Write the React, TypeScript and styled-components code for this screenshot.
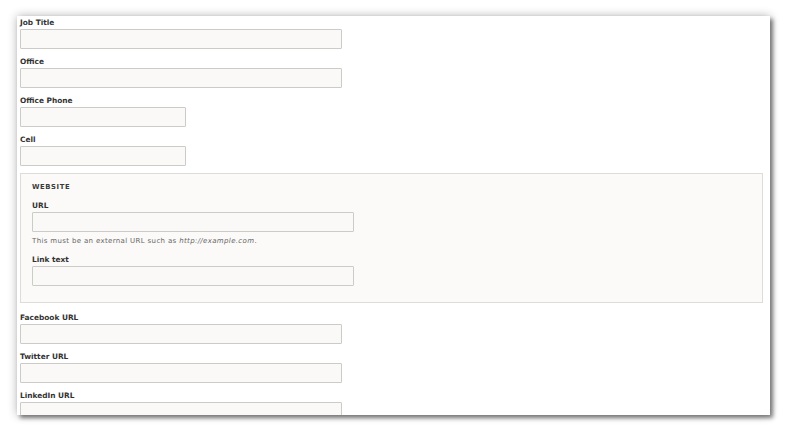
import styled, { createGlobalStyle } from 'styled-components';

const GlobalStyle = createGlobalStyle`
  html, body {
    margin: 0;
    padding: 0;
    background: #ffffff;
  }
  body {
    font-family: "DejaVu Sans", Verdana, sans-serif;
  }
`;

const Page = styled.div`
  width: 787px;
  height: 432px;
  padding: 16px 17px 0 17px;
  box-sizing: border-box;
`;

const Window = styled.div`
  width: 753px;
  height: 399px;
  background: #ffffff;
  overflow: hidden;
  box-shadow: 3px 3px 4px rgba(0, 0, 0, 0.45), 0 0 9px rgba(0, 0, 0, 0.3);
  padding: 0 3px;
  box-sizing: border-box;
`;

const Form = styled.form`
  display: flex;
  flex-direction: column;
`;

const Item = styled.div`
  display: flex;
  flex-direction: column;
  align-items: flex-start;
  margin-bottom: 6px;
`;

const Label = styled.label`
  display: block;
  font-size: 7.4px;
  font-weight: bold;
  line-height: 13px;
  color: #333333;
`;

const TextInput = styled.input<{ $size?: 'short' | 'long' }>`
  box-sizing: border-box;
  width: ${p => (p.$size === 'short' ? '166px' : '322px')};
  height: 20px;
  margin: 0;
  padding: 2px 4px;
  border: 1px solid #cbcbc8;
  border-radius: 1px;
  background: #faf9f7;
  font-family: inherit;
  font-size: 7px;
  outline: none;
`;

const Fieldset = styled.section`
  box-sizing: border-box;
  width: 743px;
  margin: 1px 0 8px 0;
  padding: 7px 11px 10px 11px;
  border: 1px solid #dddcd8;
  background: #fbfaf8;
`;

const Legend = styled.div`
  font-size: 6.8px;
  font-weight: bold;
  letter-spacing: 0.6px;
  text-transform: uppercase;
  line-height: 12px;
  color: #3a3a3a;
  margin-bottom: 6px;
`;

const Description = styled.div`
  font-size: 7px;
  line-height: 12px;
  margin-top: 3px;
  letter-spacing: 0.35px;
  color: #666666;

  em {
    font-style: italic;
  }
`;

interface FieldProps {
  label: string;
  size?: 'short' | 'long';
  description?: React.ReactNode;
}

const Field = ({ label, size = 'long', description }: FieldProps) => (
  <Item>
    <Label>{label}</Label>
    <TextInput type="text" $size={size} />
    {description && <Description>{description}</Description>}
  </Item>
);

export default function App() {
  return (
    <Page>
      <GlobalStyle />
      <Window>
        <Form>
          <Field label="Job Title" />
          <Field label="Office" />
          <Field label="Office Phone" size="short" />
          <Field label="Cell" size="short" />
          <Fieldset>
            <Legend>Website</Legend>
            <Field
              label="URL"
              description={
                <>
                  This must be an external URL such as <em>http://example.com</em>.
                </>
              }
            />
            <Field label="Link text" />
          </Fieldset>
          <Field label="Facebook URL" />
          <Field label="Twitter URL" />
          <Field label="LinkedIn URL" />
        </Form>
      </Window>
    </Page>
  );
}
